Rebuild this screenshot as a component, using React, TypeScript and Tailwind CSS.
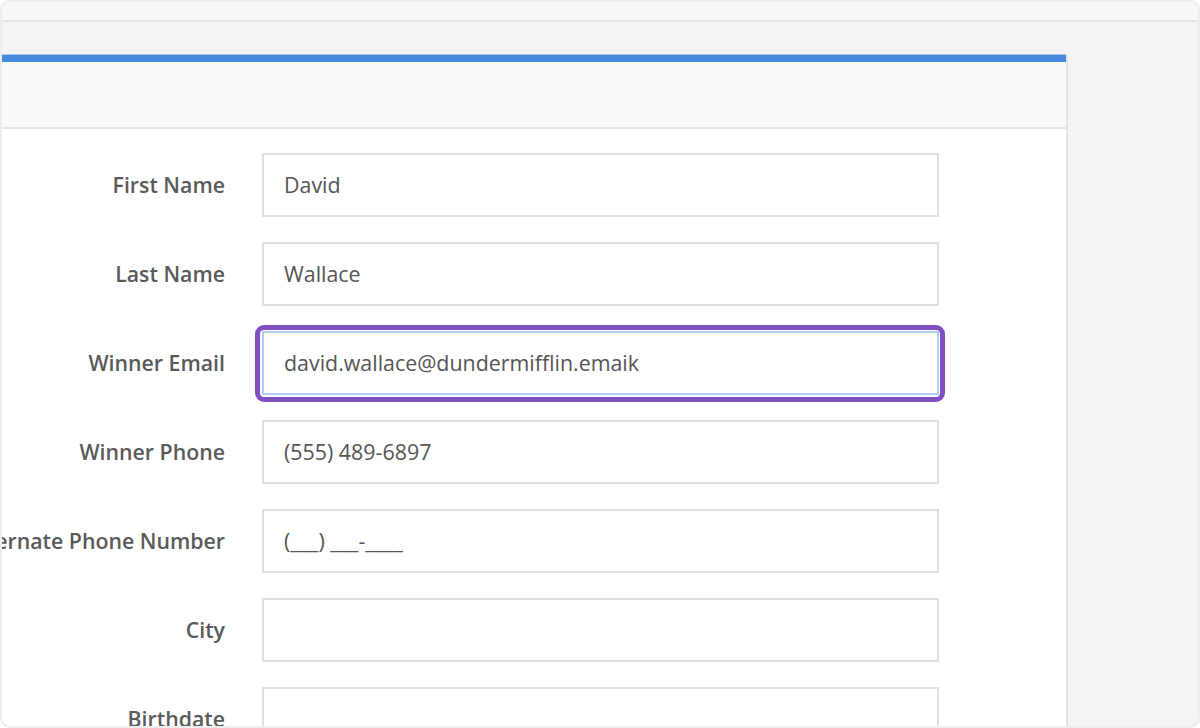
import React from "react";

const rows: { label: string; value: string; focused?: boolean }[] = [
  { label: "First Name", value: "David" },
  { label: "Last Name", value: "Wallace" },
  { label: "Winner Email", value: "david.wallace@dundermifflin.emaik", focused: true },
  { label: "Winner Phone", value: "(555) 489-6897" },
  { label: "Alternate Phone Number", value: "(___) ___-____" },
  { label: "City", value: "" },
  { label: "Birthdate", value: "" },
];

export default function App() {
  return (
    <div
      className="w-[1200px] h-[728px] overflow-hidden rounded-[10px] border-2 border-[#ececf1] bg-[#f4f4f4] flex flex-col"
      style={{ fontFamily: '"Open Sans", "Noto Sans", sans-serif' }}
    >
      <div className="h-[20px] shrink-0 bg-[#f8f8f8] border-b-2 border-[#e6e6e6]" />
      <div className="mt-[32px] w-[1066px] flex flex-col flex-1 border-r-2 border-[#e3e3e3]">
        <div className="h-[8px] shrink-0 bg-[#4689dc] border-t border-[#a8c6ee]" />
        <div className="h-[67px] shrink-0 bg-[#fafafa] border-b-2 border-[#e6e6e6]" />
        <div className="flex-1 bg-white pt-[24px] flex flex-col gap-[25px]">
          {rows.map((r) => (
            <div key={r.label} className="flex items-center shrink-0">
              <div className="w-[223px] shrink-0 flex justify-end">
                <span className="whitespace-nowrap text-[21.3px] font-semibold text-[#5a5a5a]">
                  {r.label}
                </span>
              </div>
              <div className="ml-[37px] relative w-[677px] h-[64px]">
                <div
                  className={
                    r.focused
                      ? "w-full h-full border-2 border-[#b3cff0] bg-white flex items-center pl-[20px]"
                      : "w-full h-full border-2 border-[#e0e0e0] bg-white flex items-center pl-[20px]"
                  }
                >
                  <span className="text-[21.4px] text-[#555555] whitespace-nowrap">{r.value}</span>
                </div>
                {r.focused && (
                  <div className="absolute left-[-7px] top-[-6px] right-[-6px] bottom-[-7px] border-[5px] border-[#7f4fc4] rounded-[9px] pointer-events-none" />
                )}
              </div>
            </div>
          ))}
        </div>
      </div>
    </div>
  );
}
